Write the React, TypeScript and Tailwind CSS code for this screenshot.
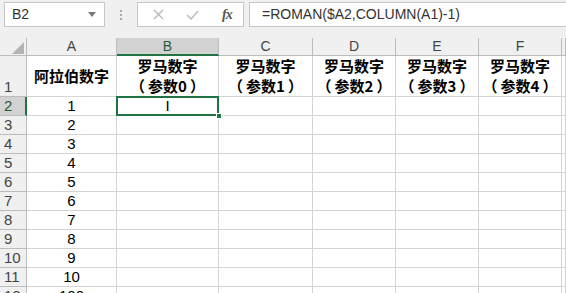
import React from 'react';

const COLS = ['A', 'B', 'C', 'D', 'E', 'F', ''];
const ROMAN_HEADERS = [0, 1, 2, 3, 4];
const NUMBERS = [1, 2, 3, 4, 5, 6, 7, 8, 9, 10];

const cjk = "font-['Noto_Sans_CJK_SC','Noto_Sans',sans-serif]";

function NameBox() {
  return (
    <div className="w-[101px] h-[25px] bg-white border border-[#c6c6c6] flex items-center justify-between pl-[7px] pr-[8px]">
      <span className="text-[14px] text-[#333]">B2</span>
      <svg width="8" height="5" viewBox="0 0 8 5">
        <path d="M0 0h8L4 5z" fill="#7a7a7a" />
      </svg>
    </div>
  );
}

function FormulaButtons() {
  return (
    <div className="w-[107px] h-[25px] bg-white border border-[#c6c6c6] flex items-center">
      <svg className="ml-[15px]" width="11" height="11" viewBox="0 0 11 11">
        <path d="M1 1l9 9M10 1l-9 9" stroke="#b8b8b8" strokeWidth="1.4" fill="none" />
      </svg>
      <svg className="ml-[22px]" width="13" height="10" viewBox="0 0 13 10">
        <path d="M1 5l4 4 7-8" stroke="#b8b8b8" strokeWidth="1.4" fill="none" />
      </svg>
      <span className="ml-[23px] text-[14px] italic text-[#555] font-['Liberation_Serif',serif] font-bold tracking-[-1px]">
        fx
      </span>
    </div>
  );
}

export default function App() {
  return (
    <div className="w-[566px] h-[293px] overflow-hidden bg-[#f0f0f0] font-['Liberation_Sans',Arial,sans-serif]">
      {/* Formula bar */}
      <div className="h-[38px] flex items-start pt-[2px] pl-[4px]">
        <NameBox />
        <div className="w-[32px] h-[25px] flex flex-col items-center justify-center gap-[2px]">
          <span className="w-[2px] h-[2px] bg-[#a8a8a8]" />
          <span className="w-[2px] h-[2px] bg-[#a8a8a8]" />
          <span className="w-[2px] h-[2px] bg-[#a8a8a8]" />
        </div>
        <FormulaButtons />
        <div className="ml-[5px] flex-1 h-[25px] bg-white border border-r-0 border-[#c6c6c6] flex items-center pl-[12px]">
          <span className="text-[14px] text-[#333]">=ROMAN($A2,COLUMN(A1)-1)</span>
        </div>
      </div>

      {/* Sheet grid */}
      <div className="grid grid-cols-[27px_90px_102px_94px_83px_83px_83px_1fr] grid-rows-[18px_41px_repeat(11,19px)] bg-white">
        {/* Corner */}
        <div className="bg-[#f0f0f0] border-r border-b border-[#bcbcbc] flex items-end justify-end pr-[2px] pb-[1px]">
          <svg width="12" height="12" viewBox="0 0 12 12">
            <path d="M12 0v12H0z" fill="#b4b4b4" />
          </svg>
        </div>
        {COLS.map((c, i) =>
          c === 'B' ? (
            <div
              key={i}
              className="bg-[#d2d2d2] border-r border-[#bcbcbc] border-b-2 border-b-[#217346] flex items-center justify-center text-[14px] text-[#1f5c3a]"
            >
              {c}
            </div>
          ) : (
            <div
              key={i}
              className="bg-[#f0f0f0] border-r border-b border-[#bcbcbc] flex items-center justify-center text-[14px] text-[#444]"
            >
              {c}
            </div>
          )
        )}

        {/* Row 1 */}
        <div className="bg-[#f0f0f0] border-r border-b border-[#bcbcbc] flex items-end pl-[4px] text-[15px] text-[#444] leading-[19px]">
          1
        </div>
        <div className={`border-r border-b border-[#d4d4d4] flex items-center justify-center text-[15px] font-bold text-black ${cjk}`}>
          阿拉伯数字
        </div>
        {ROMAN_HEADERS.map((n) => (
          <div
            key={n}
            className={`border-r border-b border-[#d4d4d4] flex flex-col items-center justify-center text-[15px] leading-[20px] font-bold text-black ${cjk}`}
          >
            <span>罗马数字</span>
            <span className="flex">
              <span className="mr-[3px]">（</span>
              <span>参数{n}</span>
              <span className="ml-[3px]">）</span>
            </span>
          </div>
        ))}
        <div className="border-r border-b border-[#d4d4d4]" />

        {/* Rows 2-11 */}
        {NUMBERS.map((n) => (
          <React.Fragment key={n}>
            {n === 1 ? (
              <div className="bg-[#d2d2d2] border-r-2 border-r-[#217346] border-b border-[#bcbcbc] flex items-center pl-[4px] text-[15px] text-[#1f5c3a]">
                {n + 1}
              </div>
            ) : (
              <div className="bg-[#f0f0f0] border-r border-b border-[#bcbcbc] flex items-center pl-[4px] text-[15px] text-[#444]">
                {n + 1}
              </div>
            )}
            <div className="border-r border-b border-[#d4d4d4] flex items-center justify-center text-[15px] text-black">
              {n}
            </div>
            <div className="relative border-r border-b border-[#d4d4d4] flex items-center justify-center text-[15px] text-black">
              {n === 1 && (
                <>
                  I
                  <div className="absolute left-[-1px] top-[-1px] right-[-1px] bottom-[-1px] border-2 border-[#217346] z-10" />
                  <div className="absolute right-[-4px] bottom-[-4px] w-[6px] h-[6px] bg-[#217346] border border-white z-20" />
                </>
              )}
            </div>
            <div className="border-r border-b border-[#d4d4d4]" />
            <div className="border-r border-b border-[#d4d4d4]" />
            <div className="border-r border-b border-[#d4d4d4]" />
            <div className="border-r border-b border-[#d4d4d4]" />
            <div className="border-r border-b border-[#d4d4d4]" />
          </React.Fragment>
        ))}

        {/* Row 12 (cut off) */}
        <div className="bg-[#f0f0f0] border-r border-[#bcbcbc] flex items-center pl-[4px] text-[15px] text-[#444]">
          12
        </div>
        <div className="border-r border-[#d4d4d4] flex items-center justify-center text-[15px] text-black">
          100
        </div>
        <div className="border-r border-[#d4d4d4]" />
        <div className="border-r border-[#d4d4d4]" />
        <div className="border-r border-[#d4d4d4]" />
        <div className="border-r border-[#d4d4d4]" />
        <div className="border-r border-[#d4d4d4]" />
        <div className="border-r border-[#d4d4d4]" />
      </div>
    </div>
  );
}
